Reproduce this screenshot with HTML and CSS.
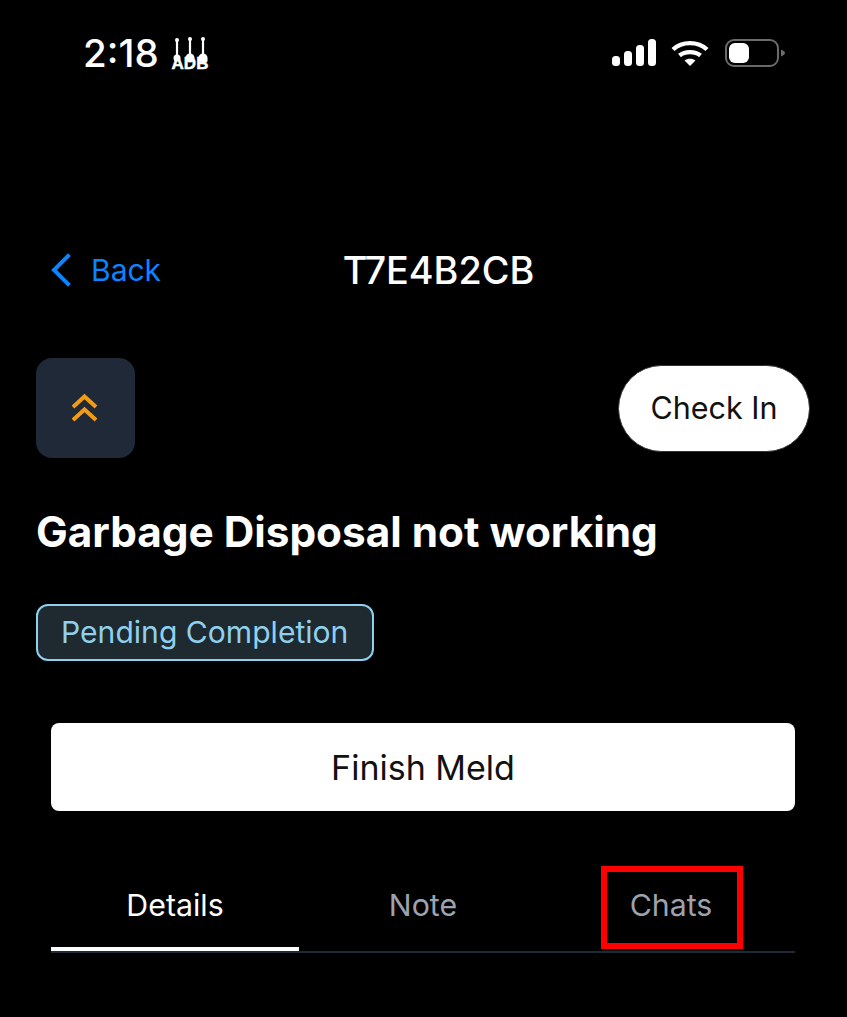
FILE: index.html
```html
<!DOCTYPE html>
<html lang="en">
<head>
    <meta charset="UTF-8">
    <meta name="viewport" content="width=device-width, initial-scale=1.0">
    <title>T7E4B2CB</title>
    <link rel="stylesheet" href="styles.css">
</head>
<body>
    <div class="status-bar">
        <div class="status-left">
            <span class="time">2:18</span>
            <svg class="guitars" width="42" height="38" viewBox="0 0 42 38">
                <g stroke="#fff" stroke-width="2.2" fill="none">
                    <path d="M8 6V24M21 5V24M34 5V24"/>
                </g>
                <g fill="#fff">
                    <circle cx="8" cy="6" r="2"/>
                    <circle cx="21" cy="5" r="2"/>
                    <circle cx="34" cy="5" r="2"/>
                    <circle cx="8" cy="24" r="3.5"/>
                    <circle cx="21" cy="24" r="4.5"/>
                    <circle cx="34" cy="24" r="4.5"/>
                </g>
                <text class="guitar-text" x="21" y="35" text-anchor="middle">ADB</text>
            </svg>
        </div>
        <div class="status-right">
            <svg width="44" height="28" viewBox="0 0 44 28" fill="#fff">
                <rect x="0" y="17" width="8" height="10" rx="3.5"/>
                <rect x="12" y="12" width="8" height="15" rx="3.5"/>
                <rect x="24" y="6" width="8" height="21" rx="3.5"/>
                <rect x="36" y="0" width="8" height="27" rx="3.5"/>
            </svg>
            <svg width="38" height="28" viewBox="0 0 38 28">
                <g fill="none" stroke="#fff" stroke-width="4.4">
                    <path d="M2 10.5C11 2 27 2 36 10.5"/>
                    <path d="M8.5 16.5C14 12 24 12 29.5 16.5"/>
                </g>
                <path d="M13.5 21.5C16.5 19 21.5 19 24.5 21.5L19 27Z" fill="#fff"/>
            </svg>
            <svg width="61" height="28" viewBox="0 0 61 28">
                <rect x="2" y="1" width="52" height="26" rx="8" fill="none" stroke="#6a6a6a" stroke-width="2"/>
                <rect x="5" y="4" width="20" height="20" rx="6" fill="#fff"/>
                <path d="M57 10.5C59 11.5 61 12.5 61 14C61 15.5 59 16.5 57 17.5Z" fill="#6a6a6a"/>
            </svg>
        </div>
    </div>

    <div class="nav-row">
        <a class="back" href="#">
            <svg width="22" height="34" viewBox="0 0 22 34" fill="none" stroke="#0a84ff" stroke-width="4" stroke-linecap="square">
                <path d="M18 3L4 17L18 31"/>
            </svg>
            <span>Back</span>
        </a>
        <div class="nav-title">T7E4B2CB</div>
    </div>

    <div class="meld">
        <div class="meld-top">
            <div class="priority">
                <svg width="28" height="30" viewBox="0 0 28 30" fill="none" stroke="#f39c12" stroke-width="4">
                    <path d="M1 14L12.5 3.5L24 14"/>
                    <path d="M1 27L12.5 16.5L24 27"/>
                </svg>
            </div>
            <button class="check-in">Check In</button>
        </div>
        <h1>Garbage Disposal not working</h1>
        <span class="badge">Pending Completion</span>
    </div>

    <div class="content">
        <button class="finish">Finish Meld</button>
        <div class="tabs">
            <div class="tab active">Details</div>
            <div class="tab">Note</div>
            <div class="tab">Chats</div>
            <div class="highlight"></div>
        </div>
    </div>
</body>
</html>
```

FILE: styles.css
```css
body {
    font-family: 'Inter', 'Liberation Sans', sans-serif;
    background-color: #000;
    color: #fff;
    margin: 0;
    height: 1017px;
    overflow: hidden;
}
.status-bar {
    display: flex;
    justify-content: space-between;
    align-items: center;
    height: 62px;
    padding: 22px 62px 0 83px;
}
.status-left {
    display: flex;
    align-items: center;
    gap: 10px;
}
.time {
    font-size: 38.5px;
    font-weight: 500;
}
.guitar-text {
    font-family: 'Liberation Sans', sans-serif;
    font-size: 17px;
    font-weight: 700;
    fill: #fff;
    stroke: #fff;
    stroke-width: 0.5px;
}
.status-right {
    display: flex;
    align-items: center;
    gap: 15px;
}
.nav-row {
    position: relative;
    display: flex;
    justify-content: center;
    align-items: center;
    height: 60px;
    margin-top: 156px;
}
.back {
    position: absolute;
    left: 50px;
    display: flex;
    align-items: center;
    gap: 19px;
    color: #0a84ff;
    font-size: 30px;
    text-decoration: none;
}
.nav-title {
    font-size: 37.8px;
    font-weight: 500;
    margin-left: 30px;
}
.meld {
    padding: 58px 37px 0 36px;
}
.meld-top {
    display: flex;
    justify-content: space-between;
    align-items: center;
}
.priority {
    display: flex;
    justify-content: center;
    align-items: center;
    width: 99px;
    height: 100px;
    background-color: #1f2937;
    border-radius: 16px;
}
.check-in {
    width: 192px;
    height: 87px;
    padding: 0 0 2px;
    background-color: #fff;
    color: #111;
    border: 1px solid #333;
    border-radius: 44px;
    font-family: inherit;
    font-size: 30.5px;
    font-weight: 400;
}
h1 {
    font-size: 42.3px;
    font-weight: 700;
    line-height: 48px;
    margin: 50px 0 48px;
}
.badge {
    display: inline-block;
    box-sizing: border-box;
    height: 57px;
    padding: 0 24px 0 23px;
    line-height: 53px;
    background-color: #1e2a30;
    border: 2px solid #8fd0ee;
    border-radius: 12px;
    color: #8fd0ee;
    font-size: 30.1px;
}
.content {
    padding: 0 52px 0 51px;
    margin-top: 62px;
}
.finish {
    display: block;
    width: 100%;
    height: 88px;
    background-color: #fff;
    color: #111;
    border: 0;
    border-radius: 8px;
    font-family: inherit;
    font-size: 34px;
    font-weight: 400;
}
.tabs {
    position: relative;
    display: flex;
    margin-top: 55px;
    border-bottom: 2px solid #1f2937;
}
.tab {
    flex: 1;
    height: 85px;
    padding-top: 22px;
    box-sizing: border-box;
    line-height: 34px;
    text-align: center;
    font-size: 30.3px;
    color: #9ca3af;
}
.tab.active {
    color: #fff;
    border-bottom: 4px solid #fff;
}
/* red marker drawn over the Chats tab */
.highlight {
    position: absolute;
    left: 550px;
    top: 0;
    width: 142px;
    height: 83px;
    box-sizing: border-box;
    border: 6px solid #f00;
}
```
